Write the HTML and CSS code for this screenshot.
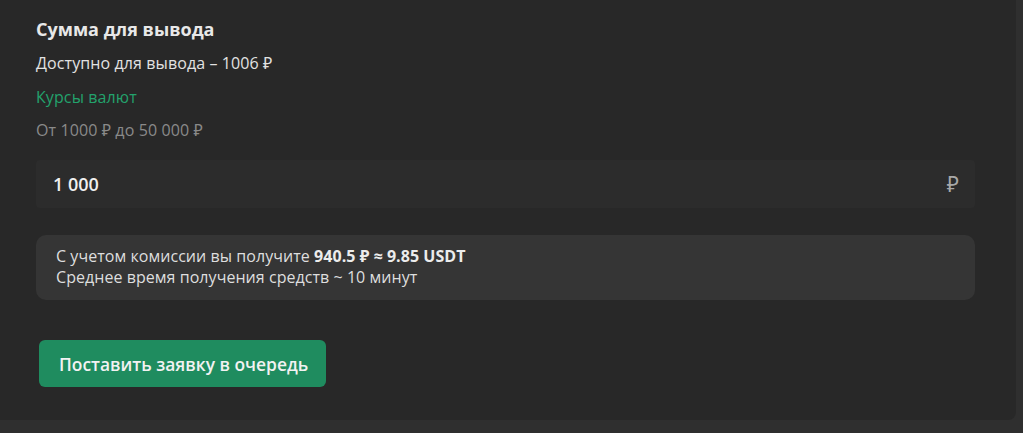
FILE: index.html
```html
<!DOCTYPE html>
<html lang="ru">
<head>
<meta charset="utf-8">
<link rel="stylesheet" href="styles.css">
</head>
<body>
<div class="card">
  <h2 class="title">Сумма для вывода</h2>
  <p class="available">Доступно для вывода – 1006 ₽</p>
  <a class="rates">Курсы валют</a>
  <p class="limits">От 1000 ₽ до 50 000 ₽</p>
  <div class="input">
    <span class="value">1 000</span>
    <span class="currency">₽</span>
  </div>
  <div class="info">
    <div>С учетом комиссии вы получите <b>940.5 ₽ ≈ 9.85 USDT</b></div>
    <div>Среднее время получения средств ~ 10 минут</div>
  </div>
  <button class="submit">Поставить заявку в очередь</button>
</div>
</body>
</html>
```
FILE: styles.css
```css
html, body {
  margin: 0;
  padding: 0;
}
body {
  background: #2f2f2f;
  font-family: "Open Sans", "Noto Sans", sans-serif;
  color: #e6e6e6;
}
.card {
  width: 1016px;
  height: 420px;
  box-sizing: border-box;
  background: #282828;
  border-bottom-right-radius: 8px;
  padding: 16px 41px 0 36px;
  display: flex;
  flex-direction: column;
  align-items: flex-start;
}
.title {
  margin: 0;
  font-size: 18px;
  line-height: 26px;
  font-weight: 700;
  color: #e8e8e8;
}
.available {
  margin: 10px 0 0;
  font-size: 16px;
  line-height: 22px;
  letter-spacing: 0.1px;
  color: #e2e2e2;
}
.rates {
  margin-top: 12px;
  font-size: 16px;
  line-height: 22px;
  letter-spacing: 0.1px;
  color: #23a26c;
}
.limits {
  margin: 11px 0 0;
  font-size: 16px;
  line-height: 22px;
  letter-spacing: 0.1px;
  color: #8a8a8a;
}
.input {
  align-self: stretch;
  margin-top: 19px;
  height: 48px;
  box-sizing: border-box;
  background: #2c2c2c;
  border-radius: 4px;
  padding: 0 16px 0 17px;
  display: flex;
  align-items: center;
  justify-content: space-between;
}
.value {
  font-size: 18px;
  font-weight: 600;
  color: #f0f0f0;
}
.currency {
  font-size: 21px;
  color: #a8a8a8;
}
.info {
  align-self: stretch;
  margin-top: 27px;
  background: #353535;
  border-radius: 10px;
  padding: 11px 20px 12px;
  font-size: 16px;
  line-height: 21px;
  letter-spacing: 0.05px;
  color: #dedede;
}
.info b {
  font-weight: 700;
  color: #ececec;
}
.submit {
  margin: 40px 0 0 3px;
  height: 47px;
  padding: 0 18px 0 20px;
  border: 0;
  border-radius: 6px;
  background: #1f8c5f;
  color: #f2f2f2;
  font-family: inherit;
  font-size: 17.4px;
  font-weight: 600;
}
```
